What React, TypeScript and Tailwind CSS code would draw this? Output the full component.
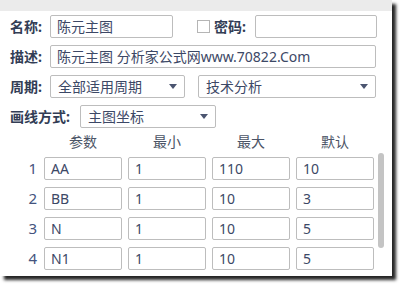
import { useState } from "react";

const font = { fontFamily: '"Noto Sans", "Noto Sans CJK SC", sans-serif' };

function Caret() {
  return (
    <svg width="8" height="5" viewBox="0 0 8 5" className="shrink-0">
      <path d="M0 0h8L4 5z" fill="#4b5570" />
    </svg>
  );
}

function Field({ value, className }: { value: string; className: string }) {
  return (
    <div
      className={`flex h-[23px] items-center rounded-[2px] border border-[#bdbdbd] bg-white pl-[6px] text-[14px] text-[#3c4866] ${className}`}
    >
      <span className="leading-none">{value}</span>
    </div>
  );
}

function Select({ value, className }: { value: string; className: string }) {
  return (
    <div
      className={`flex h-[23px] items-center justify-between rounded-[2px] border border-[#bdbdbd] bg-white pl-[7px] pr-[7px] text-[14px] text-[#3c4866] ${className}`}
    >
      <span className="leading-none">{value}</span>
      <Caret />
    </div>
  );
}

function Label({ text, className = "w-[40px]" }: { text: string; className?: string }) {
  return (
    <div className={`text-[14px] font-bold leading-none text-[#323d55] ${className}`}>{text}</div>
  );
}

const params = [
  { n: "1", name: "AA", min: "1", max: "110", def: "10" },
  { n: "2", name: "BB", min: "1", max: "10", def: "3" },
  { n: "3", name: "N", min: "1", max: "10", def: "5" },
  { n: "4", name: "N1", min: "1", max: "10", def: "5" },
];

export default function App() {
  const [pwd] = useState(false);
  return (
    <div className="h-[285px] w-[402px] bg-white" style={font}>
      <div className="h-[276px] w-[392px] bg-white shadow-[4px_4px_3px_rgba(0,0,0,0.85)]">
        <div className="h-[11px] bg-[#ebebeb]" />
        <div className="pl-[10px] pt-[4px]">
          <div className="flex h-[23px] items-center">
            <Label text="名称:" />
            <Field value="陈元主图" className="w-[123px]" />
            <div
              className={`ml-[24px] h-[13px] w-[13px] border border-[#b5b5b5] bg-white ${pwd ? "bg-blue-500" : ""}`}
            />
            <Label text="密码:" className="ml-[4px] w-[41px]" />
            <Field value="" className="w-[122px]" />
          </div>
          <div className="mt-[7px] flex h-[23px] items-center">
            <Label text="描述:" />
            <Field value="陈元主图 分析家公式网www.70822.Com" className="w-[326px]" />
          </div>
          <div className="mt-[7px] flex h-[23px] items-center">
            <Label text="周期:" />
            <Select value="全部适用周期" className="w-[135px]" />
            <Select value="技术分析" className="ml-[13px] w-[178px]" />
          </div>
          <div className="mt-[7px] flex h-[23px] items-center">
            <Label text="画线方式:" className="w-[70px]" />
            <Select value="主图坐标" className="w-[136px]" />
          </div>
        </div>
        <div className="mt-[7px] flex pl-[44px] text-[14px] leading-none text-[#4b5466]">
          <div className="w-[78px] text-center">参数</div>
          <div className="ml-[6px] w-[78px] text-center">最小</div>
          <div className="ml-[6px] w-[78px] text-center">最大</div>
          <div className="ml-[6px] w-[78px] text-center">默认</div>
        </div>
        <div className="mt-[4px] flex">
          <div className="pt-[4px]">
            {params.map((p, i) => (
              <div key={p.n} className={`flex items-center ${i > 0 ? "mt-[7px]" : ""}`}>
                <div className="w-[38px] pr-[1px] text-right text-[15px] leading-none text-[#44547e]">
                  {p.n}
                </div>
                <Field value={p.name} className="ml-[6px] w-[78px]" />
                <Field value={p.min} className="ml-[6px] w-[78px]" />
                <Field value={p.max} className="ml-[6px] w-[78px]" />
                <Field value={p.def} className="ml-[6px] w-[78px]" />
              </div>
            ))}
          </div>
          <div className="ml-[4px] h-[95px] w-[6px] rounded-full bg-[#c4c4c4]" />
        </div>
      </div>
    </div>
  );
}
